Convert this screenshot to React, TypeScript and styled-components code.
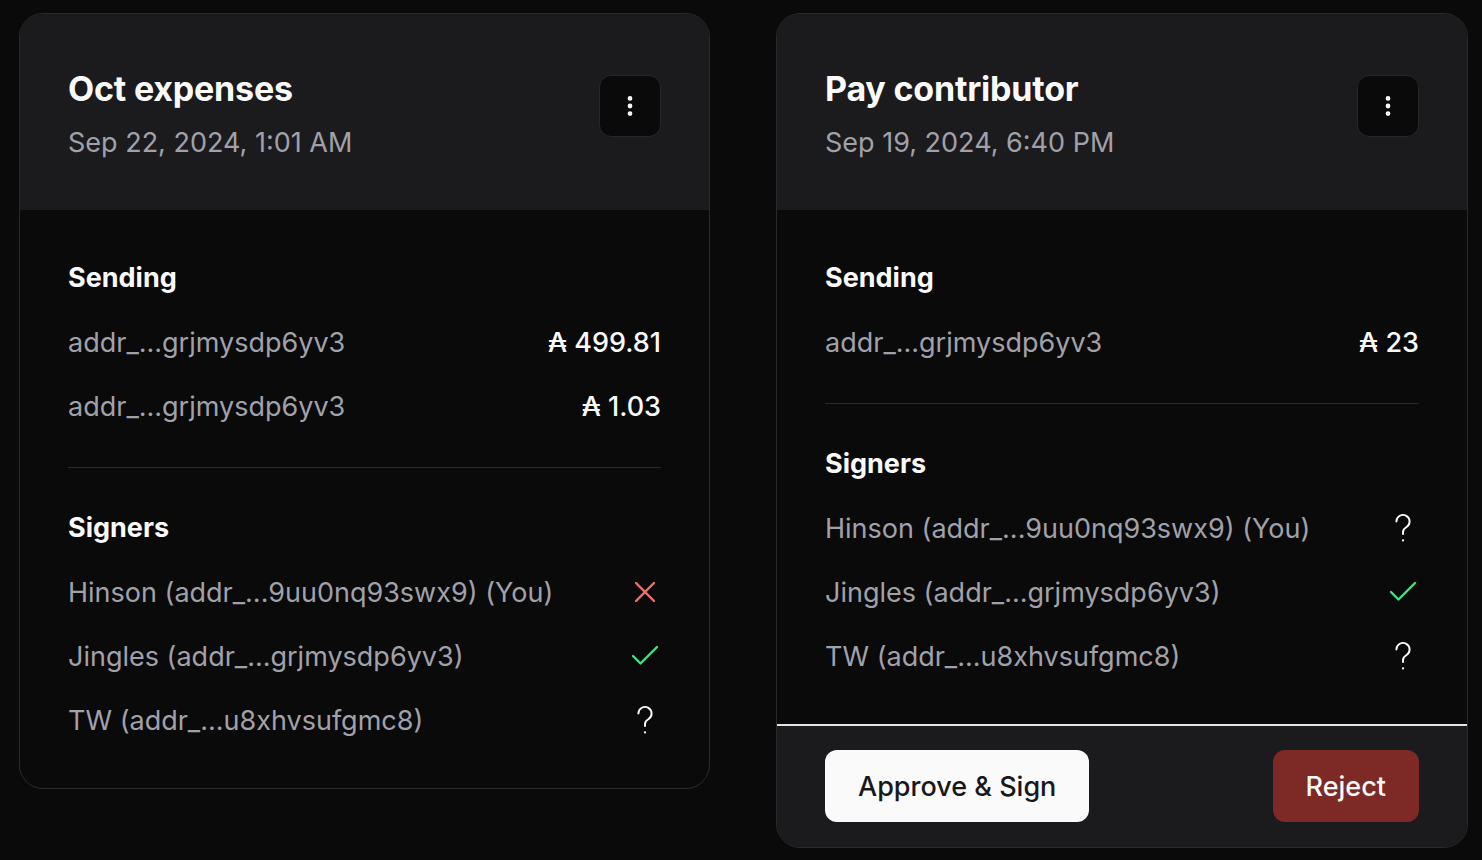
import styled, { createGlobalStyle } from 'styled-components';
import { X, Check, EllipsisVertical } from 'lucide-react';

type SignerStatus = 'rejected' | 'signed' | 'pending';

interface Output {
    address: string;
    amount: string;
}

interface Signer {
    name: string;
    status: SignerStatus;
}

interface Transaction {
    id: number;
    title: string;
    date: string;
    outputs: Output[];
    signers: Signer[];
    canSign?: boolean;
}

const transactions: Transaction[] = [
    {
        id: 1,
        title: 'Oct expenses',
        date: 'Sep 22, 2024, 1:01 AM',
        outputs: [
            { address: 'addr_...grjmysdp6yv3', amount: '499.81' },
            { address: 'addr_...grjmysdp6yv3', amount: '1.03' },
        ],
        signers: [
            { name: 'Hinson (addr_...9uu0nq93swx9) (You)', status: 'rejected' },
            { name: 'Jingles (addr_...grjmysdp6yv3)', status: 'signed' },
            { name: 'TW (addr_...u8xhvsufgmc8)', status: 'pending' },
        ],
    },
    {
        id: 2,
        title: 'Pay contributor',
        date: 'Sep 19, 2024, 6:40 PM',
        outputs: [{ address: 'addr_...grjmysdp6yv3', amount: '23' }],
        signers: [
            { name: 'Hinson (addr_...9uu0nq93swx9) (You)', status: 'pending' },
            { name: 'Jingles (addr_...grjmysdp6yv3)', status: 'signed' },
            { name: 'TW (addr_...u8xhvsufgmc8)', status: 'pending' },
        ],
        canSign: true,
    },
];

const QuestionIcon = () => (
    <svg width="36" height="36" viewBox="0 0 24 24" fill="none" stroke="currentColor" strokeWidth="1.3" strokeLinecap="round" strokeLinejoin="round">
        <path d="M7.6 7.6a4.4 4.4 0 1 1 6.6 3.9c-1.4.8-2.2 1.8-2.2 3.3v1.2" />
        <circle cx="12" cy="20.3" r="0.75" fill="currentColor" stroke="none" />
    </svg>
);

const StatusIcon = ({ status }: { status: SignerStatus }) => {
    if (status === 'rejected') return <X size={36} strokeWidth={1.6} color="#f2706a" />;
    if (status === 'signed') return <Check size={36} strokeWidth={1.6} color="#4ade80" />;
    return <QuestionIcon />;
};

const TransactionCard = ({ tx }: { tx: Transaction }) => {
    return (
        <Card>
            <Header>
                <div>
                    <Title>{tx.title}</Title>
                    <DateText>{tx.date}</DateText>
                </div>
                <MenuButton>
                    <EllipsisVertical size={26} strokeWidth={2.4} />
                </MenuButton>
            </Header>
            <Body>
                <Section>
                    <SectionTitle>Sending</SectionTitle>
                    {tx.outputs.map((o, i) => (
                        <Row key={i}>
                            <Muted>{o.address}</Muted>
                            <Amount>₳ {o.amount}</Amount>
                        </Row>
                    ))}
                </Section>
                <Divider />
                <Section>
                    <SectionTitle>Signers</SectionTitle>
                    {tx.signers.map((s, i) => (
                        <Row key={i}>
                            <Muted>{s.name}</Muted>
                            <IconBox>
                                <StatusIcon status={s.status} />
                            </IconBox>
                        </Row>
                    ))}
                </Section>
            </Body>
            {tx.canSign && (
                <Footer>
                    <Button variant="light">Approve &amp; Sign</Button>
                    <Button variant="danger">Reject</Button>
                </Footer>
            )}
        </Card>
    );
};

export default function App() {
    return (
        <>
            <GlobalStyle />
            <Page>
                {transactions.map((tx) => (
                    <TransactionCard tx={tx} key={tx.id} />
                ))}
            </Page>
        </>
    );
}

const GlobalStyle = createGlobalStyle`
    html, body {
        margin: 0;
        padding: 0;
        background: #0a0a0b;
        font-family: Inter, "Noto Sans", "DejaVu Sans", sans-serif;
        color: #fafafa;
    }
    * {
        box-sizing: border-box;
    }
`;

const Page = styled.div`
    display: grid;
    grid-template-columns: 691px 692px;
    column-gap: 66px;
    align-items: start;
    padding: 13px 0 0 19px;
    min-height: 860px;
`;

const Card = styled.div`
    display: flex;
    flex-direction: column;
    border: 1px solid #2a2a2d;
    border-radius: 24px;
    overflow: hidden;
    background: #0a0a0b;
`;

const Header = styled.div`
    display: flex;
    justify-content: space-between;
    align-items: flex-start;
    padding: 51px 48px 48px;
    background: #1b1b1d;
`;

const Title = styled.div`
    font-size: 34px;
    line-height: 48px;
    font-weight: 700;
    letter-spacing: -0.2px;
`;

const DateText = styled.div`
    margin-top: 11px;
    font-size: 27px;
    line-height: 38px;
    color: #a1a1aa;
`;

const MenuButton = styled.div`
    width: 62px;
    height: 62px;
    margin-top: 10px;
    display: flex;
    align-items: center;
    justify-content: center;
    border: 1px solid #27272a;
    border-radius: 12px;
    background: #0a0a0b;
    color: #fafafa;
`;

const Body = styled.div`
    display: flex;
    flex-direction: column;
    padding: 48px;
`;

const Section = styled.div`
    display: flex;
    flex-direction: column;
    gap: 24px;
`;

const SectionTitle = styled.div`
    font-size: 27px;
    line-height: 40px;
    font-weight: 700;
`;

const Row = styled.div`
    display: flex;
    justify-content: space-between;
    align-items: center;
    height: 40px;
    font-size: 27px;
`;

const Muted = styled.span`
    color: #a1a1aa;
`;

const Amount = styled.span`
    color: #fafafa;
    font-weight: 500;
    font-family: Inter, "DejaVu Sans", sans-serif;
`;

const IconBox = styled.span`
    display: flex;
    width: 36px;
    height: 36px;
    margin-right: -2px;
    color: #fafafa;
`;

const Divider = styled.div`
    height: 1px;
    background: #2a2a2d;
    margin: 41px 0 40px;
`;

const Footer = styled.div`
    display: flex;
    justify-content: space-between;
    align-items: center;
    padding: 24px 48px 25px;
    border-top: 2px solid #e4e4e7;
    background: #1b1b1d;
`;

const Button = styled.button<{ variant: 'light' | 'danger' }>`
    height: 72px;
    padding: 0 33px;
    border: none;
    border-radius: 12px;
    font-family: Inter, sans-serif;
    font-size: 27px;
    font-weight: 500;
    background: ${(p) => (p.variant === 'light' ? '#fafafa' : '#7d2925')};
    color: ${(p) => (p.variant === 'light' ? '#18181b' : '#fafafa')};
`;
